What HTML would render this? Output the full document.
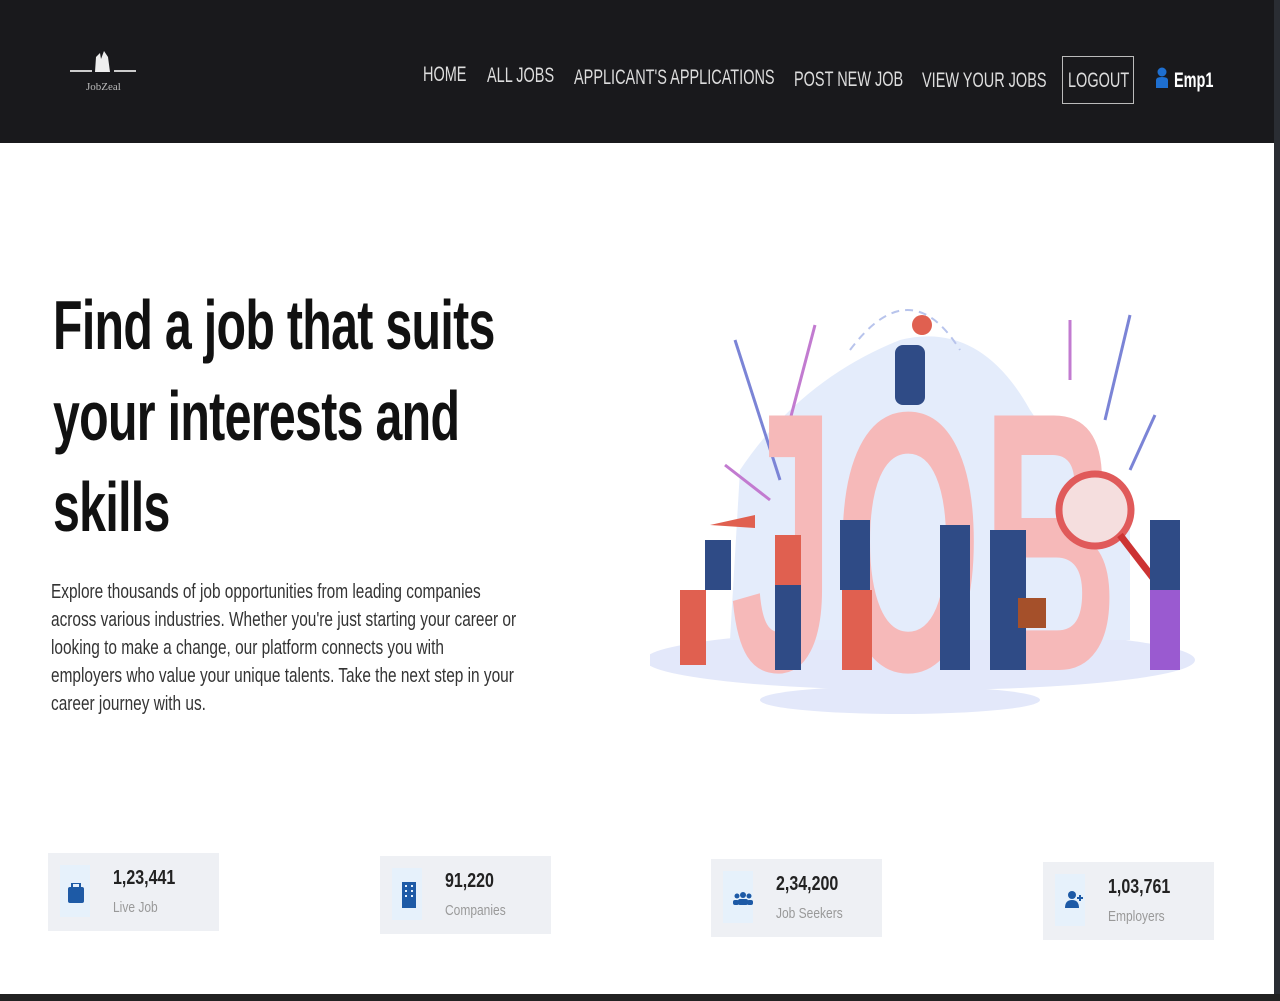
<!DOCTYPE html>
<html><head><meta charset="utf-8"><style>
*{margin:0;padding:0;box-sizing:border-box}
body{width:1280px;height:1001px;overflow:hidden;background:#fff;font-family:"Liberation Sans",sans-serif;position:relative}
.nav{position:absolute;left:0;top:0;width:1280px;height:143px;background:#19191c}
.edge{position:absolute;right:0;top:0;width:6px;height:1001px;background:#2a2d33}
.bot{position:absolute;left:0;top:994px;width:1280px;height:7px;background:#222}
.n{position:absolute;color:#ddd;font-size:21px;transform:scaleX(.69);transform-origin:left;white-space:nowrap}
h1{position:absolute;left:53px;top:280px;font-size:70px;line-height:91px;font-weight:bold;color:#111;transform:scaleX(.69);transform-origin:left;white-space:nowrap;letter-spacing:-1px}
.p{position:absolute;left:51px;top:578px;width:606px;font-size:20px;line-height:28px;color:#333;transform:scaleX(.77);transform-origin:left}
.st{position:absolute;width:171px;height:78px;background:#eef0f4}
.st .ic{position:absolute;left:12px;top:12px;width:30px;height:52px;background:#e6f1fb}
.st b{position:absolute;left:65px;top:14px;font-size:20px;color:#222;transform:scaleX(.8);transform-origin:left}
.st span{position:absolute;left:65px;top:46px;font-size:15px;color:#999;transform:scaleX(.8);transform-origin:left}
</style></head><body>
<div class="nav">
<svg style="position:absolute;left:68px;top:45px" width="70" height="50"><rect x="2" y="25" width="22" height="2" fill="#ccc"/><rect x="46" y="25" width="22" height="2" fill="#ccc"/><path d="M27 27 L28 12 L32 8 L33 14 L36 6 L40 12 L42 27Z" fill="#eee"/><text x="18" y="45" fill="#bbb" font-family="Liberation Serif" font-size="11">JobZeal</text></svg>
<div class="n" style="left:423px;top:63px">HOME</div>
<div class="n" style="left:487px;top:64px">ALL JOBS</div>
<div class="n" style="left:574px;top:66px">APPLICANT'S APPLICATIONS</div>
<div class="n" style="left:794px;top:68px">POST NEW JOB</div>
<div class="n" style="left:922px;top:69px">VIEW YOUR JOBS</div>
<div style="position:absolute;left:1062px;top:56px;width:72px;height:48px;border:1.5px solid #bbb"></div>
<div class="n" style="left:1068px;top:69px">LOGOUT</div>
<svg style="position:absolute;left:1155px;top:67px" width="14" height="22"><circle cx="7" cy="5" r="4.5" fill="#1e6fd0"/><path d="M1 21 L1 13 Q1 10 7 10 Q13 10 13 13 L13 21Z" fill="#1e6fd0"/></svg>
<div class="n" style="left:1174px;top:69px;color:#fff;font-weight:bold">Emp1</div>
</div>
<div class="edge"></div><div class="bot"></div>
<h1>Find a job that suits<br>your interests and<br>skills</h1>
<div class="p">Explore thousands of job opportunities from leading companies across various industries. Whether you're just starting your career or looking to make a change, our platform connects you with employers who value your unique talents. Take the next step in your career journey with us.</div>
<svg style="position:absolute;left:650px;top:270px" width="560" height="460">
<ellipse cx="270" cy="390" rx="275" ry="30" fill="#e3e8fa"/>
<ellipse cx="250" cy="430" rx="140" ry="14" fill="#e3e8fa"/>
<path d="M90 200 Q150 110 250 70 Q330 50 380 140 Q420 200 480 250 L480 370 L80 370Z" fill="#e4ecfb"/>
<path d="M200 80 Q260 0 310 80" stroke="#b8c4ec" stroke-width="2" stroke-dasharray="8 6" fill="none"/>
<g stroke="#7b84d6" stroke-width="3" fill="none"><path d="M130 210 L85 70"/><path d="M455 150 L480 45"/><path d="M480 200 L505 145"/></g>
<g stroke="#c27bd0" stroke-width="3" fill="none"><path d="M140 150 L165 55"/><path d="M420 110 L420 50"/><path d="M120 230 L75 195"/></g>
<text transform="translate(80,400) scale(0.51,1)" font-size="370" font-weight="bold" fill="#f6b9b9" font-family="Liberation Sans">JOB</text>
<circle cx="445" cy="240" r="36" fill="#f5dede" stroke="#e05a5a" stroke-width="7"/><path d="M470 265 L520 330" stroke="#c33" stroke-width="7"/>
<g fill="#2f4b86"><rect x="245" y="75" width="30" height="60" rx="8"/><rect x="55" y="270" width="26" height="50"/><rect x="125" y="270" width="26" height="130"/><rect x="190" y="250" width="30" height="70"/><rect x="290" y="255" width="30" height="145"/><rect x="340" y="260" width="36" height="140"/><rect x="500" y="250" width="30" height="70"/></g>
<g fill="#e06050"><rect x="30" y="320" width="26" height="75"/><rect x="192" y="320" width="30" height="80"/><rect x="125" y="265" width="26" height="50"/><circle cx="272" cy="55" r="10"/><path d="M60 255 L105 245 L105 258Z"/></g>
<rect x="500" y="320" width="30" height="80" fill="#9a5ad0"/>
<rect x="368" y="328" width="28" height="30" fill="#a5502a"/>
</svg>
<div class="st" style="left:48px;top:853px"><div class="ic"></div><svg style="position:absolute;left:20px;top:30px" width="16" height="20"><rect x="0" y="4" width="16" height="16" rx="2" fill="#1d5aa6"/><rect x="4" y="0" width="8" height="5" fill="none" stroke="#1d5aa6" stroke-width="2"/></svg><b>1,23,441</b><span>Live Job</span></div>
<div class="st" style="left:380px;top:856px"><div class="ic"></div><svg style="position:absolute;left:22px;top:26px" width="14" height="26"><rect width="14" height="26" fill="#1d5aa6"/><g fill="#e6f1fb"><rect x="3" y="3" width="2" height="2"/><rect x="9" y="3" width="2" height="2"/><rect x="3" y="8" width="2" height="2"/><rect x="9" y="8" width="2" height="2"/><rect x="3" y="13" width="2" height="2"/><rect x="9" y="13" width="2" height="2"/></g></svg><b>91,220</b><span>Companies</span></div>
<div class="st" style="left:711px;top:859px"><div class="ic"></div><svg style="position:absolute;left:22px;top:32px" width="20" height="14"><circle cx="10" cy="4" r="3" fill="#1d5aa6"/><circle cx="4" cy="5" r="2.5" fill="#1d5aa6"/><circle cx="16" cy="5" r="2.5" fill="#1d5aa6"/><rect x="5" y="8" width="10" height="6" rx="2" fill="#1d5aa6"/><rect x="0" y="9" width="6" height="5" rx="2" fill="#1d5aa6"/><rect x="14" y="9" width="6" height="5" rx="2" fill="#1d5aa6"/></svg><b>2,34,200</b><span>Job Seekers</span></div>
<div class="st" style="left:1043px;top:862px"><div class="ic"></div><svg style="position:absolute;left:22px;top:28px" width="20" height="18"><circle cx="7" cy="5" r="4" fill="#1d5aa6"/><path d="M0 18 Q0 10 7 10 Q14 10 14 18Z" fill="#1d5aa6"/><path d="M15 5 V11 M12 8 H18" stroke="#1d5aa6" stroke-width="2"/></svg><b>1,03,761</b><span>Employers</span></div>
</body></html>
